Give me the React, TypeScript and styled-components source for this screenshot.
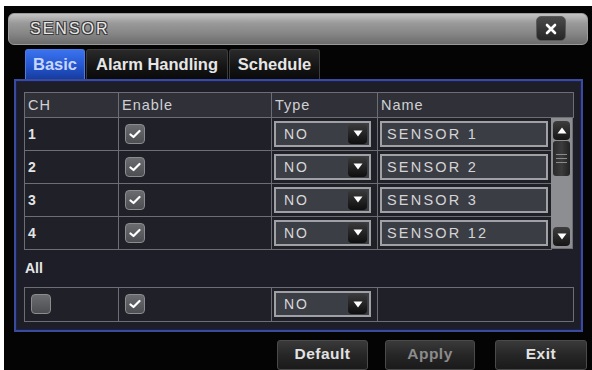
import React from 'react';
import styled, { createGlobalStyle } from 'styled-components';

const GlobalStyle = createGlobalStyle`
  html, body {
    margin: 0;
    padding: 0;
    background: #ffffff;
  }
  body {
    font-family: "Liberation Sans", Arial, sans-serif;
    overflow: hidden;
  }
`;

const Page = styled.div`
  width: 592px;
  height: 370px;
  padding: 6px 0 0 4px;
  box-sizing: border-box;
`;

const Dialog = styled.div`
  width: 588px;
  height: 364px;
  background: #040404;
  padding: 7px 4px 0 4px;
  box-sizing: border-box;
  display: flex;
  flex-direction: column;
`;

const TitleBar = styled.div`
  height: 32px;
  border-radius: 6px;
  border: 1px solid #9a9a9a;
  box-sizing: border-box;
  background: linear-gradient(to bottom, #c4c4c4 0%, #9a9a9a 30%, #868686 65%, #6c6c6c 100%);
  display: flex;
  align-items: center;
  justify-content: space-between;
  padding: 0 21px 0 21px;
`;

const Title = styled.span`
  font-size: 16px;
  letter-spacing: 2px;
  color: #e8e8e8;
  text-shadow: -1px -1px 0 #3a3a3a, 1px -1px 0 #3a3a3a, -1px 1px 0 #3a3a3a, 1px 1px 0 #3a3a3a;
`;

const CloseButton = styled.div`
  width: 30px;
  height: 25px;
  border-radius: 5px;
  background: linear-gradient(to bottom, #4a4a4a, #262626);
  border: 1px solid #5a5a5a;
  box-sizing: border-box;
  display: flex;
  align-items: center;
  justify-content: center;
`;

const Tabs = styled.div`
  display: flex;
  margin: 4px 0 0 17px;
  height: 30px;
`;

const Tab = styled.div<{ $active?: boolean; $w: number }>`
  width: ${p => p.$w}px;
  height: 30px;
  box-sizing: border-box;
  margin-right: 1px;
  display: flex;
  align-items: center;
  justify-content: center;
  font-weight: bold;
  font-size: 16.5px;
  color: ${p => (p.$active ? '#c8d6ff' : '#e6e6e6')};
  border: 1px solid ${p => (p.$active ? '#4d7be6' : '#3c3c3c')};
  border-bottom: none;
  border-radius: 3px 3px 0 0;
  background: ${p =>
    p.$active
      ? 'linear-gradient(to bottom, #3b73ee 0%, #2456cf 55%, #173c9e 100%)'
      : 'linear-gradient(to bottom, #2a2a2a 0%, #141414 60%, #0a0a0a 100%)'};
`;

const Panel = styled.div`
  margin-left: 6px;
  width: 569px;
  height: 256px;
  box-sizing: border-box;
  border: 2px solid #3a4b9c;
  box-shadow: inset 0 0 0 1px #1a2150;
  background: #1d1e27;
  padding: 11px 0 0 8px;
  display: flex;
  flex-direction: column;
`;

const Table = styled.div`
  width: 549px;
  display: flex;
  flex-direction: column;
`;

const Row = styled.div<{ $cols: string; $h: number; $header?: boolean }>`
  display: grid;
  grid-template-columns: ${p => p.$cols};
  height: ${p => p.$h}px;
  background: ${p => (p.$header ? '#303138' : '#1f2028')};
`;

const Cell = styled.div<{ $pad?: number }>`
  box-sizing: border-box;
  border: 1px solid #6c6e74;
  margin: 0 -1px -1px 0;
  display: flex;
  align-items: center;
  padding-left: ${p => p.$pad ?? 3}px;
  color: #e4e4e4;
  font-size: 14px;
  font-weight: bold;
  overflow: hidden;
`;

const HeaderText = styled.span`
  color: #cfd0d4;
  font-weight: normal;
  font-size: 14.5px;
  letter-spacing: 1px;
`;

const Body = styled.div`
  display: flex;
`;

const Rows = styled.div`
  display: flex;
  flex-direction: column;
  width: 527px;
`;

const Check = styled.div`
  width: 20px;
  height: 20px;
  border-radius: 4px;
  box-sizing: border-box;
  border: 1px solid #8a8c90;
  background: linear-gradient(to bottom, #6a6c70, #4c4e52);
  display: flex;
  align-items: center;
  justify-content: center;
`;

const Select = styled.div`
  width: 97px;
  height: 26px;
  box-sizing: border-box;
  border: 2px solid #9fa1a5;
  background: #3c3e45;
  display: flex;
  align-items: center;
  justify-content: space-between;
  padding: 0 2px 0 8px;
  color: #d8d8d8;
  font-size: 14px;
  font-weight: normal;
  letter-spacing: 2px;
`;

const ArrowBox = styled.div`
  width: 19px;
  height: 20px;
  border-radius: 4px;
  background: linear-gradient(to bottom, #3a3a3a, #0e0e0e);
  display: flex;
  align-items: center;
  justify-content: center;
`;

const NameInput = styled.div`
  width: 168px;
  height: 26px;
  box-sizing: border-box;
  border: 2px solid #9fa1a5;
  background: #3b3d44;
  display: flex;
  align-items: center;
  padding-left: 5px;
  color: #d4d4d6;
  font-size: 14.5px;
  font-weight: normal;
  letter-spacing: 2.2px;
`;

const Scrollbar = styled.div`
  width: 22px;
  box-sizing: border-box;
  border: 1px solid #6c6e74;
  border-left: none;
  background: #8c8e92;
  display: flex;
  flex-direction: column;
  align-items: center;
  padding: 3px 0 2px;
`;

const ScrollButton = styled.div`
  width: 17px;
  height: 19px;
  border-radius: 4px;
  background: linear-gradient(to bottom, #3e3e3e, #151515);
  display: flex;
  align-items: center;
  justify-content: center;
`;

const Thumb = styled.div`
  width: 17px;
  height: 35px;
  margin-top: 1px;
  border-radius: 3px;
  background: linear-gradient(to right, #2a2a2a, #3c3c3c, #222);
  display: flex;
  flex-direction: column;
  align-items: center;
  justify-content: center;
  gap: 3px;
`;

const ThumbLine = styled.div`
  width: 11px;
  height: 1px;
  background: #8a8a8a;
`;

const Spacer = styled.div`
  flex: 1;
`;

const AllLabel = styled.div`
  height: 38px;
  display: flex;
  align-items: center;
  padding-left: 1px;
  color: #e8e8e8;
  font-weight: bold;
  font-size: 14px;
`;

const Buttons = styled.div`
  display: flex;
  justify-content: flex-end;
  margin-top: 8px;
  padding-right: 1px;
  gap: 17px;
`;

const Button = styled.div<{ $w: number; $disabled?: boolean }>`
  width: ${p => p.$w}px;
  height: 30px;
  box-sizing: border-box;
  border: 1px solid #4a4a4a;
  border-radius: 3px;
  background: linear-gradient(to bottom, #3a3a3a 0%, #262626 50%, #1a1a1a 100%);
  display: flex;
  align-items: center;
  justify-content: center;
  padding-bottom: 3px;
  font-size: 15.5px;
  font-weight: bold;
  letter-spacing: 0.5px;
  color: ${p => (p.$disabled ? '#8c8c8c' : '#e2e2e2')};
  &:last-child {
    margin-left: 3px;
  }
`;

const CheckMark = () => (
  <svg width="12" height="10" viewBox="0 0 12 10">
    <polyline points="1.5,5.5 4.5,8 10.5,2" fill="none" stroke="#ffffff" strokeWidth="2.2" strokeLinecap="round" strokeLinejoin="round" />
  </svg>
);

const DownTriangle = () => (
  <svg width="10" height="7" viewBox="0 0 10 7">
    <polygon points="0.5,0.5 9.5,0.5 5,6.5" fill="#ffffff" />
  </svg>
);

const UpTriangle = () => (
  <svg width="10" height="7" viewBox="0 0 10 7">
    <polygon points="0.5,6.5 9.5,6.5 5,0.5" fill="#ffffff" />
  </svg>
);

const CloseIcon = () => (
  <svg width="12" height="12" viewBox="0 0 12 12">
    <path d="M2 2 L10 10 M10 2 L2 10" stroke="#ffffff" strokeWidth="2.6" strokeLinecap="round" />
  </svg>
);

const HEAD_COLS = '94px 153px 106px 196px';
const ROW_COLS = '94px 153px 106px 174px';

const sensors = [
  { ch: '1', name: 'SENSOR 1' },
  { ch: '2', name: 'SENSOR 2' },
  { ch: '3', name: 'SENSOR 3' },
  { ch: '4', name: 'SENSOR 12' },
];

export default function App() {
  return (
    <>
      <GlobalStyle />
      <Page>
        <Dialog>
          <TitleBar>
            <Title>SENSOR</Title>
            <CloseButton>
              <CloseIcon />
            </CloseButton>
          </TitleBar>
          <Tabs>
            <Tab $active $w={60}>Basic</Tab>
            <Tab $w={142}>Alarm Handling</Tab>
            <Tab $w={91}>Schedule</Tab>
          </Tabs>
          <Panel>
            <Table>
              <Row $cols={HEAD_COLS} $h={25} $header>
                <Cell><HeaderText>CH</HeaderText></Cell>
                <Cell><HeaderText>Enable</HeaderText></Cell>
                <Cell><HeaderText>Type</HeaderText></Cell>
                <Cell><HeaderText>Name</HeaderText></Cell>
              </Row>
              <Body>
                <Rows>
                  {sensors.map(s => (
                    <Row key={s.ch} $cols={ROW_COLS} $h={33}>
                      <Cell>{s.ch}</Cell>
                      <Cell $pad={6}>
                        <Check><CheckMark /></Check>
                      </Cell>
                      <Cell $pad={2}>
                        <Select>
                          NO
                          <ArrowBox><DownTriangle /></ArrowBox>
                        </Select>
                      </Cell>
                      <Cell $pad={2}>
                        <NameInput>{s.name}</NameInput>
                      </Cell>
                    </Row>
                  ))}
                </Rows>
                <Scrollbar>
                  <ScrollButton><UpTriangle /></ScrollButton>
                  <Thumb>
                    <ThumbLine />
                    <ThumbLine />
                    <ThumbLine />
                  </Thumb>
                  <Spacer />
                  <ScrollButton><DownTriangle /></ScrollButton>
                </Scrollbar>
              </Body>
              <AllLabel>All</AllLabel>
              <Row $cols={HEAD_COLS} $h={34}>
                <Cell $pad={6}>
                  <Check />
                </Cell>
                <Cell $pad={6}>
                  <Check><CheckMark /></Check>
                </Cell>
                <Cell $pad={2}>
                  <Select>
                    NO
                    <ArrowBox><DownTriangle /></ArrowBox>
                  </Select>
                </Cell>
                <Cell />
              </Row>
            </Table>
          </Panel>
          <Buttons>
            <Button $w={91}>Default</Button>
            <Button $w={90} $disabled>Apply</Button>
            <Button $w={92}>Exit</Button>
          </Buttons>
        </Dialog>
      </Page>
    </>
  );
}
